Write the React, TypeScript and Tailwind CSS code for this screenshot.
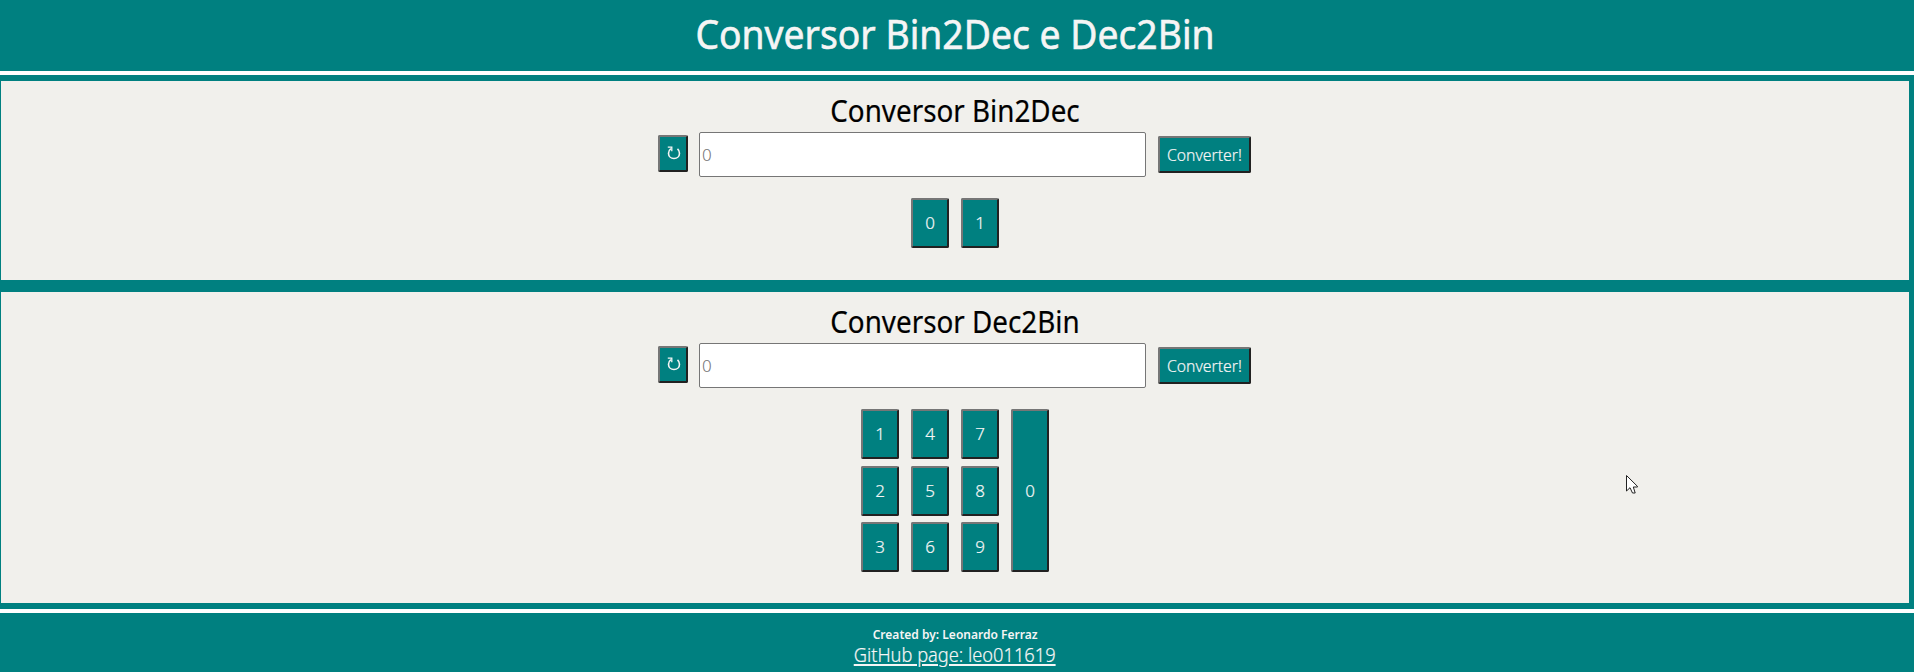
const raised =
  'flex items-center justify-center rounded-[2px] border-2 border-t-[#767676] border-l-[#767676] border-r-[#212121] border-b-[#212121] bg-[#008080] pb-px text-[17px] leading-none font-light text-[#f5f5f5] [-webkit-text-stroke:0.2px_#f5f5f5]';

function Converter({ title }: { title: string }) {
  return (
    <>
      <h2 className="mt-[10px] h-[41px] scale-x-[0.927] text-center text-[30px] leading-[40px] text-black [-webkit-text-stroke:0.2px_#000]">{title}</h2>
      <div className="flex h-[45px] justify-center pr-px">
        <button className={`${raised} mt-[3px] mr-[11px] h-[37px] w-[30px] pl-px`} aria-label="Limpar">
          <svg width="14" height="14" viewBox="0 0 14 14" fill="none" stroke="#f5f5f5">
            <path d="M3.9 2.6C2.3 3.9 1.5 5.4 1.5 7.2C1.5 10.3 3.9 12.5 7 12.5S12.5 10.3 12.5 7.2C12.5 5.4 11.8 4 10.5 2.9" strokeWidth="1.6" />
            <path d="M0.8 1.2H4.8V5.2" strokeWidth="1.3" />
          </svg>
        </button>
        <input
          className="h-[45px] w-[447px] rounded-[2px] border border-[#767676] bg-white px-[2px] text-[17px] font-light text-black placeholder:text-[#757575]"
          placeholder="0"
        />
        <button className={`${raised} mt-1 ml-3 h-[37px] w-[93px]`}>
          <span className="scale-x-[0.925]">Converter!</span>
        </button>
      </div>
    </>
  );
}

export default function App() {
  return (
    <div className="flex h-[672px] w-full flex-col bg-white [font-family:'Noto_Sans',sans-serif]">
      <header className="h-[71px] bg-[#008080] pr-1">
        <h1 className="scale-x-[0.932] text-center text-[40px] leading-[67px] text-[#f5f5f5] [-webkit-text-stroke:0.6px_#f5f5f5]">
          Conversor Bin2Dec e Dec2Bin
        </h1>
      </header>
      <main className="my-1 flex h-[534px] flex-col gap-3 bg-[#008080] py-1.5 pr-[5px] pl-px">
        <section className="h-[199px] bg-[#f1f0ec]">
          <Converter title="Conversor Bin2Dec" />
          <div className="mt-[21px] flex justify-center gap-3">
            <button className={`${raised} h-[50px] w-[38px]`}>0</button>
            <button className={`${raised} h-[50px] w-[38px]`}>1</button>
          </div>
        </section>
        <section className="h-[311px] bg-[#f1f0ec]">
          <Converter title="Conversor Dec2Bin" />
          <div className="mt-[21px] grid grid-flow-col grid-cols-[repeat(4,38px)] grid-rows-[51px_50px_50px] justify-center gap-x-3 gap-y-1.5">
            {['1', '2', '3', '4', '5', '6', '7', '8', '9'].map((n) => (
              <button key={n} className={`${raised} h-[50px]`}>{n}</button>
            ))}
            <button className={`${raised} row-span-3 h-[163px]`}>0</button>
          </div>
        </section>
      </main>
      <footer className="flex h-[59px] flex-col items-center bg-[#008080] pt-[12px] pr-[4px] text-[#f5f5f5]">
        <p className="scale-x-[0.925] text-[13px] leading-[18px] font-semibold">Created by: Leonardo Ferraz</p>
        <a
          href="#github"
          className="scale-x-[0.912] text-[20px] leading-[24px] font-light underline decoration-2 underline-offset-2 [-webkit-text-stroke:0.2px_#f5f5f5]"
        >
          GitHub page: leo011619
        </a>
      </footer>
      <svg className="absolute top-[474px] left-[1625px]" width="14" height="21" viewBox="0 0 14 21">
        <path d="M1.5 1.5V17L5 13.7L7.5 19H10.2L8.3 13H12.5V12.4Z" fill="#fff" stroke="#222" strokeWidth="1" />
      </svg>
    </div>
  );
}
